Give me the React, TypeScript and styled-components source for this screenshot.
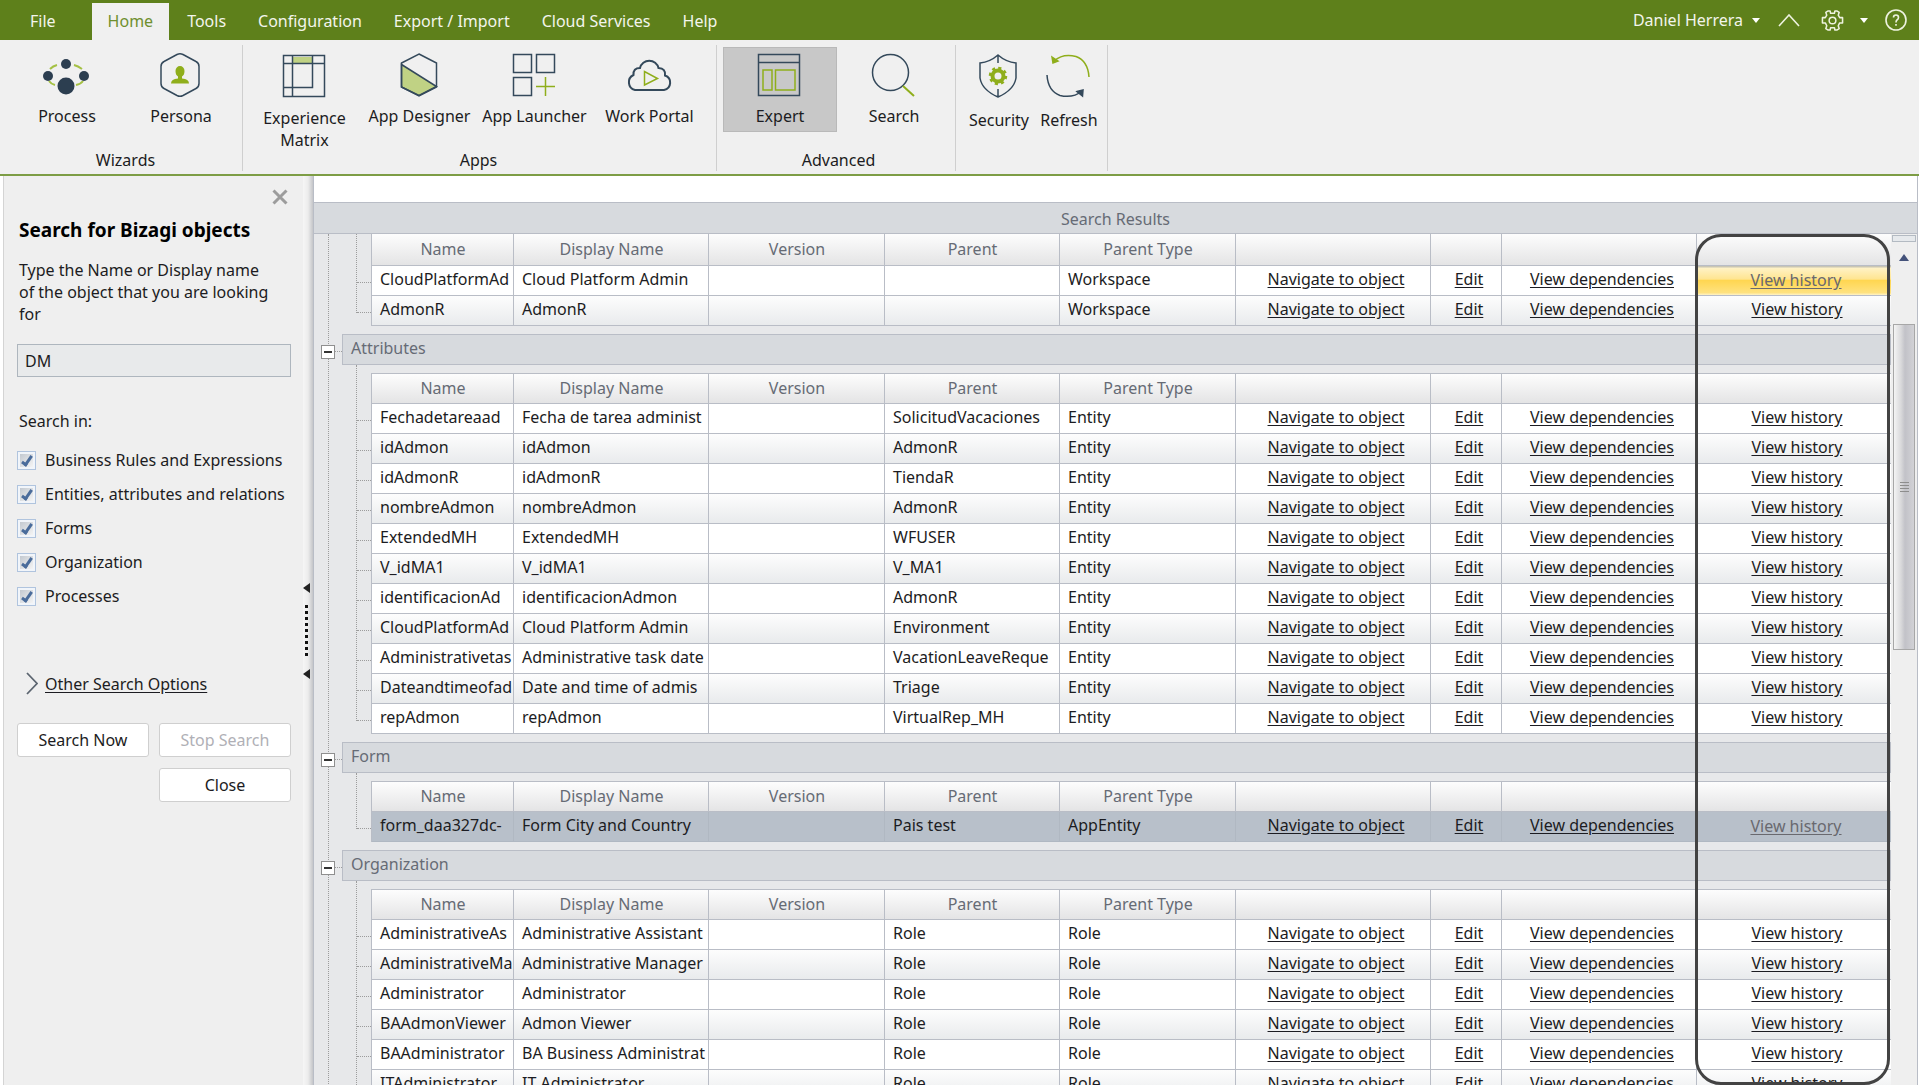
import React from "react";
import styled, { createGlobalStyle, css } from "styled-components";

const color = {
  green: "#5e801b",
  lime: "#8fae1b",
  navy: "#34495b",
  panel: "#f0f0f0",
  line: "#b9bdc6",
  bar: "#d7dade",
  muted: "#666b75",
  text: "#1c1c22",
};

const GlobalStyle = createGlobalStyle`
  *, *::before, *::after { box-sizing: border-box; }
  body { margin: 0; background: #fff; }
  body, button, input, table {
    font-family: "Noto Sans", "Open Sans", sans-serif;
    font-size: 16px;
    line-height: 22px;
    color: ${color.text};
  }
  button { padding: 0; border: 0; background: none; cursor: pointer; }
`;

const Page = styled.div`
  display: flex;
  flex-direction: column;
  height: 100vh;
  overflow: hidden;
`;

/* ---------- top menu ---------- */

const MenuBar = styled.header`
  display: flex;
  justify-content: space-between;
  height: 40px;
  flex: none;
  background: ${color.green};
`;

const Tabs = styled.nav`
  display: flex;
  align-items: flex-end;
`;

const Tab = styled.button<{ $active?: boolean; $file?: boolean }>`
  height: 37px;
  padding: 0 16px 2px;
  color: #f3f5ec;
  ${(p) => p.$file && css`padding: 0 36px 2px 30px;`}
  ${(p) =>
    p.$active &&
    css`
      margin-right: 2px;
      background: ${color.panel};
      color: #6f8f2e;
    `}
`;

const UserArea = styled.div`
  display: flex;
  align-items: center;
  padding-right: 12px;
  color: #f3f5ec;
`;

const UserButton = styled.button`
  display: flex;
  align-items: center;
  gap: 9px;
  color: inherit;
`;

const IconButton = styled.button<{ $gap: number }>`
  display: flex;
  align-items: center;
  gap: 16px;
  margin-left: ${(p) => p.$gap}px;
  color: inherit;
`;

const Caret = styled.span`
  border: 4px solid transparent;
  border-top: 5px solid #fff;
  border-bottom: 0;
`;

/* ---------- ribbon ---------- */

const Ribbon = styled.section`
  display: flex;
  flex: none;
  height: 136px;
  padding: 5px 0 3px 4px;
  background: ${color.panel};
  border-bottom: 2px solid #7d9d45;
`;

const Group = styled.div<{ $left: number; $right: number }>`
  display: flex;
  flex-direction: column;
  justify-content: space-between;
  padding: 2px ${(p) => p.$right}px 0 ${(p) => p.$left}px;
  border-right: 1px solid #cfcfcf;
`;

const GroupButtons = styled.div`
  display: flex;
`;

const GroupCaption = styled.div`
  padding-left: 3px;
  text-align: center;
`;

const ToolButton = styled.button<{ $active?: boolean; $width: number; $low?: boolean; $gap: number }>`
  display: flex;
  flex-direction: column;
  align-items: center;
  justify-content: flex-start;
  gap: ${(p) => p.$gap}px;
  width: ${(p) => p.$width}px;
  height: 85px;
  padding-top: ${(p) => (p.$low ? 5 : 4)}px;
  border: 1px solid transparent;
  white-space: pre-line;
  ${(p) =>
    p.$active &&
    css`
      background: #c8c8c8;
      border-color: #b9b9b9;
    `}
  svg { flex: none; margin-right: 2px; }
`;

/* ---------- workspace ---------- */

const Workspace = styled.main`
  display: flex;
  flex: 1;
  min-height: 0;
  padding: 0 1px 0 3px;
`;

const Sidebar = styled.aside`
  flex: none;
  width: 300px;
  padding: 11px 12px 0 13px;
  border-left: 1px solid #d4d4d4;
  background: #efefef;
`;

const CloseRow = styled.div`
  display: flex;
  justify-content: flex-end;
  padding-right: 3px;
`;

const CloseIcon = styled.button`
  display: flex;
  height: 20px;
  align-items: center;
`;

const Title = styled.h2`
  margin: 12px 0 0 2px;
  font-size: 19px;
  line-height: 22px;
  color: #000;
`;

const Hint = styled.label`
  display: block;
  margin: 18px 18px 19px 2px;
`;

const SearchInput = styled.input`
  display: block;
  width: 100%;
  height: 33px;
  padding: 0 7px;
  border: 1px solid #aeb6be;
  background: #e8eaeb;
`;

const Options = styled.fieldset`
  display: flex;
  flex-direction: column;
  gap: 12px;
  margin: 33px 0 0;
  padding: 0;
  border: 0;
`;

const Legend = styled.legend`
  margin: 0 0 17px 2px;
  padding: 0;
`;

const Option = styled.label`
  display: flex;
  align-items: center;
  gap: 9px;
  white-space: nowrap;
`;

const Checkbox = styled.input`
  appearance: none;
  display: grid;
  place-items: center;
  width: 19px;
  height: 19px;
  margin: 0;
  border: 1px solid #b0c4de;
  background: linear-gradient(135deg, #c3c9d0, #f4f4f4) content-box, #f1f5fa;
  padding: 2px;
  &:checked::after {
    content: "";
    width: 6px;
    height: 12px;
    margin-bottom: 3px;
    border: solid #4a6c9b;
    border-width: 0 3px 3px 0;
    transform: rotate(35deg);
  }
`;

const MoreRow = styled.div`
  display: flex;
  align-items: center;
  gap: 7px;
  margin: 65px 0 28px 9px;
`;

const TextLink = styled.a`
  color: ${color.text};
  text-decoration: underline;
  text-underline-offset: 2px;
`;

const Actions = styled.div`
  display: grid;
  grid-template-columns: 1fr 1fr;
  gap: 11px 10px;
`;

const ActionButton = styled.button<{ $second?: boolean }>`
  height: 34px;
  border: 1px solid #cfcfcf;
  border-radius: 3px;
  background: #fff;
  ${(p) => p.$second && css`grid-column: 2;`}
  &:disabled { color: #b0b0b6; }
`;

const Splitter = styled.div`
  display: flex;
  flex: none;
  flex-direction: column;
  align-items: center;
  gap: 12px;
  width: 10px;
  padding: 407px 3px 0 0;
  background: linear-gradient(90deg, #f6f6f6, #ececec 50%, #c4c5c8);
`;

const Arrow = styled.span`
  border: 5px solid transparent;
  border-right: 7px solid #222;
  border-left: 0;
`;

const Dots = styled.span`
  width: 3px;
  height: 52px;
  background: repeating-linear-gradient(180deg, #111 0 3px, transparent 3px 6px);
`;

/* ---------- results ---------- */

const Results = styled.section`
  display: flex;
  flex: 1;
  flex-direction: column;
  min-width: 0;
  padding-top: 26px;
  border: 0 solid ${color.line};
  border-width: 0 1px;
`;

const ResultsTitle = styled.h1`
  flex: none;
  margin: 0;
  height: 32px;
  border: solid ${color.line};
  border-width: 1px 0;
  background: ${color.bar};
  color: ${color.muted};
  font-size: 16px;
  font-weight: 400;
  line-height: 32px;
  text-align: center;
`;

const ResultsBody = styled.div`
  display: flex;
  flex: 1;
  min-height: 0;
  background: #e7e8ea;
`;

const TreeViewport = styled.div`
  position: relative;
  flex: 1;
  min-width: 0;
  overflow: hidden;
`;

const Tree = styled.div`
  margin-left: 14px;
  border-left: 1px dotted #9c9c9c;
`;

const GroupHead = styled.div`
  display: flex;
  align-items: center;
  height: 31px;
  margin-left: -8px;
`;

const Toggle = styled.button`
  display: grid;
  place-items: center;
  width: 14px;
  height: 14px;
  margin-top: 4px;
  border: 1px solid #8f8f8f;
  background: #fff;
  &::after {
    content: "";
    width: 8px;
    height: 2px;
    background: #333;
  }
`;

const Stub = styled.span`
  width: 7px;
  margin-top: 4px;
  border-top: 1px dotted #9c9c9c;
`;

const GroupTitle = styled.h3`
  flex: 1;
  margin: 0;
  height: 31px;
  padding: 0 8px;
  border: 1px solid ${color.line};
  background: ${color.bar};
  color: ${color.muted};
  font-size: 16px;
  font-weight: 400;
  line-height: 26px;
`;

const GroupBody = styled.div`
  display: flex;
  align-items: flex-start;
  padding-left: 27px;
  margin-bottom: 8px;
`;

const Rail = styled.div<{ $first?: boolean }>`
  flex: none;
  width: 15px;
  padding-top: ${(p) => (p.$first ? 19 : 26)}px;
  border-left: 1px dotted #9c9c9c;
`;

const Tick = styled.div`
  height: 30px;
  border-bottom: 1px dotted #9c9c9c;
`;

const Grid = styled.table<{ $first?: boolean }>`
  flex: 1;
  width: 100%;
  min-width: 0;
  margin-top: ${(p) => (p.$first ? 0 : 8)}px;
  table-layout: fixed;
  border-collapse: separate;
  border-spacing: 0;
  border: solid ${color.line};
  border-width: ${(p) => (p.$first ? 0 : 1)}px 0 0 1px;
`;

const Col = styled.col<{ $w: number }>`
  width: ${(p) => p.$w}px;
`;

const HeadCell = styled.th<{ $tall?: boolean }>`
  height: ${(p) => (p.$tall ? 32 : 30)}px;
  padding: 0 0 1px 1px;
  border: solid ${color.line};
  border-width: 0 1px 1px 0;
  background: linear-gradient(#fdfdfd, #e4e4e5);
  color: ${color.muted};
  font-weight: 400;
`;

const Row = styled.tr<{ $selected?: boolean }>`
  background: #fff;
  &:nth-child(even) { background: linear-gradient(#fdfdfd, #e8eaec); }
  ${(p) => p.$selected && css`&& { background: #b8c0ca; }`}
`;

const Cell = styled.td<{ $link?: boolean; $selected?: boolean; $hot?: boolean; $dim?: boolean }>`
  height: 30px;
  padding: 0 0 4px ${(p) => (p.$link ? 6 : 8)}px;
  border: solid ${(p) => (p.$selected ? "#b0b8c2" : color.line)};
  border-width: 0 1px 1px 0;
  overflow: hidden;
  white-space: nowrap;
  text-align: ${(p) => (p.$link ? "center" : "left")};
  ${(p) =>
    p.$hot &&
    css`
      background: linear-gradient(#c9c5b4 0 1px, #fff2c6 2px, #ffe591 45%, #ffd651 50%, #ffe27f 92%, #fff3c8);
    `}
  ${(p) =>
    p.$dim &&
    css`
      padding: 0 0 2px 4px;
      a { color: #69696f; }
    `}
`;

const Callout = styled.div`
  position: absolute;
  top: 0;
  bottom: 0;
  right: 1px;
  width: calc((100% - 58px) * 0.1285);
  border: 3px solid #434343;
  border-radius: 26px;
  pointer-events: none;
`;

const ScrollTrack = styled.div`
  display: flex;
  flex: none;
  flex-direction: column;
  align-items: center;
  width: 26px;
  padding-top: 1px;
  background: #efefef;
`;

const SplitBox = styled.div`
  align-self: stretch;
  height: 7px;
  margin: 0 1px;
  border: 1px solid #b3bac2;
  background: #e6e9ec;
`;

const ScrollUp = styled.button`
  height: 7px;
  margin: 12px 0 63px;
  border: 5px solid transparent;
  border-bottom: 7px solid #44527a;
  border-top: 0;
`;

const ScrollThumb = styled.div`
  display: flex;
  align-items: center;
  justify-content: center;
  width: 22px;
  height: 326px;
  border: 1px solid #a7a7a7;
  background: linear-gradient(90deg, #f4f4f4, #d9d9db 35%, #c2c2c8 55%, #d2d2d6);
`;

const Grip = styled.span`
  width: 9px;
  height: 11px;
  background: repeating-linear-gradient(180deg, #8d8d8d 0 1px, transparent 1px 3px);
`;

/* ---------- icons ---------- */

type IconProps = { children: React.ReactNode };
const ToolIcon = ({ children }: IconProps) => (
  <svg width="46" height="46" viewBox="0 0 46 46" fill="none" stroke={color.navy} strokeWidth="1.5" aria-hidden="true">
    {children}
  </svg>
);

const icons: Record<string, React.ReactNode> = {
  Process: (
    <ToolIcon>
      <path d="M7 17q3-3 7-4M31 13q4 1 8 4M6 29q2 3 6 4M33 33q5-1 7-4" stroke="#a5c145" strokeWidth="2" />
      <g fill="#2c3e50" stroke="none">
        <circle cx="23" cy="12" r="5" />
        <circle cx="5" cy="24" r="5" />
        <circle cx="41" cy="24" r="5" />
        <circle cx="23" cy="34" r="8.5" />
      </g>
    </ToolIcon>
  ),
  Persona: (
    <ToolIcon>
      <path d="M20 2.500q3-1.500 6 0l13 7q3 1.500 3 5v17q0 3.500-3 5l-13 7q-3 1.500-6 0l-13-7q-3-1.500-3-5v-17q0-3.500 3-5z" />
      <path d="M23 14a4.500 5 0 0 1 4.500 5q0 4-2.500 5.500v2q7 .5 7 5H14q0-4.500 7-5v-2q-2.500-1.500-2.500-5.500a4.500 5 0 0 1 4.500-5z" fill={color.lime} stroke="none" />
    </ToolIcon>
  ),
  "Experience\nMatrix": (
    <ToolIcon>
      <path d="M12 4h19v7H12z" fill="#c0d284" stroke="none" />
      <path d="M2.500 2.500h41v41h-41zM2.500 10.500h41M11.500 2.500v41M31.500 2.500v32h-29" />
    </ToolIcon>
  ),
  "App Designer": (
    <ToolIcon>
      <path d="M5.500 12.500l35 22-17.500 9-17.500-8.500z" fill="#c0d284" />
      <path d="M23 2l17.500 9v24L23 44 5.500 35V11z" />
    </ToolIcon>
  ),
  "App Launcher": (
    <ToolIcon>
      <path d="M2.500 2.500h18v18h-18zM25.500 2.500h18v18h-18zM2.500 25.500h18v18h-18z" />
      <path d="M34.500 25v19M25 34.500h19" stroke={color.lime} />
    </ToolIcon>
  ),
  "Work Portal": (
    <ToolIcon>
      <path d="M9 38h29a7.500 7.500 0 0 0 1-14.500q1-7-6.500-7.500A9.500 9.500 0 0 0 14 16q-7 0-6.500 7A8 8 0 0 0 9 38z" strokeWidth="2" />
      <path d="M18.500 19.500v13.500l13-6.500z" stroke={color.lime} />
    </ToolIcon>
  ),
  Expert: (
    <ToolIcon>
      <path d="M2.500 2.500h41v41h-41zM2.500 10.500h41" />
      <path d="M7 18h9v20H7zM19.500 18H39v20H19.500z" stroke={color.lime} />
    </ToolIcon>
  ),
  Search: (
    <ToolIcon>
      <circle cx="20.5" cy="20.5" r="18" />
      <path d="M33 34l11 10" stroke={color.lime} strokeWidth="2" />
    </ToolIcon>
  ),
  Security: (
    <ToolIcon>
      <path d="M23 2q8 7 18 8v15q-2 12-18 19Q7 37 5 25V10Q15 9 23 2zM23 2v8M23 36v8" />
      <circle cx="23" cy="23" r="5.5" stroke={color.lime} strokeWidth="4" />
      <circle cx="23" cy="23" r="8" stroke={color.lime} strokeWidth="2.5" strokeDasharray="3.14 3.14" />
    </ToolIcon>
  ),
  Refresh: (
    <ToolIcon>
      <path d="M9 8q9-8 22-4.500Q43 8 44 24" stroke={color.lime} />
      <path d="M7 4l1 6 5-2z" fill={color.lime} stroke={color.lime} />
      <path d="M2 22q1 16 13 20.500 13 3 22-4.500" />
      <path d="M32 38.500l6-1.500-.5 6z" fill={color.navy} />
    </ToolIcon>
  ),
};

const GearIcon = () => (
  <svg width="23" height="23" viewBox="0 0 24 24" fill="none" stroke="#eef2e0" strokeWidth="1.6" aria-hidden="true">
    <path d="M10 4.500L9.500 2h-2L5 3.500l1 3L4.500 9H1.500v5.500h3L6 17.500l-1 3L7.500 22h2l.5-2.500h4l.5 2.500h2l2.500-1.500-1-3 1.500-3h3V9h-3L18 6.500l1-3L16.500 2h-2L14 4.500z" strokeLinejoin="round" />
    <circle cx="12" cy="12" r="3.5" />
  </svg>
);

/* ---------- data ---------- */

type Tool = { label: string; low?: boolean; gap?: number };
type RibbonGroup = { caption: string; width: number; left: number; right: number; tools: Tool[] };

const ribbonGroups: RibbonGroup[] = [
  { caption: "Wizards", width: 114, left: 6, right: 4, tools: [{ label: "Process" }, { label: "Persona" }] },
  {
    caption: "Apps",
    width: 115,
    left: 4,
    right: 9,
    tools: [
      { label: "Experience\nMatrix", low: true, gap: 8 },
      { label: "App Designer" },
      { label: "App Launcher" },
      { label: "Work Portal" },
    ],
  },
  { caption: "Advanced", width: 114, left: 6, right: 4, tools: [{ label: "Expert" }, { label: "Search" }] },
  {
    caption: "",
    width: 70,
    left: 8,
    right: 3,
    tools: [
      { label: "Security", low: true, gap: 10 },
      { label: "Refresh", low: true, gap: 10 },
    ],
  },
];

const searchAreas = [
  "Business Rules and Expressions",
  "Entities, attributes and relations",
  "Forms",
  "Organization",
  "Processes",
];

const columns = [
  { label: "Name", width: 142 },
  { label: "Display Name", width: 195 },
  { label: "Version", width: 176 },
  { label: "Parent", width: 175 },
  { label: "Parent Type", width: 176 },
  { label: "", width: 195 },
  { label: "", width: 71 },
  { label: "", width: 195 },
  { label: "", width: 195 },
];

type Item = [name: string, display: string, parent: string, type: string];
type ResultGroup = { title?: string; items: Item[]; hot?: number; selected?: number };

const groups: ResultGroup[] = [
  {
    hot: 0,
    items: [
      ["CloudPlatformAd", "Cloud Platform Admin", "", "Workspace"],
      ["AdmonR", "AdmonR", "", "Workspace"],
    ],
  },
  {
    title: "Attributes",
    items: [
      ["Fechadetareaad", "Fecha de tarea administ", "SolicitudVacaciones", "Entity"],
      ["idAdmon", "idAdmon", "AdmonR", "Entity"],
      ["idAdmonR", "idAdmonR", "TiendaR", "Entity"],
      ["nombreAdmon", "nombreAdmon", "AdmonR", "Entity"],
      ["ExtendedMH", "ExtendedMH", "WFUSER", "Entity"],
      ["V_idMA1", "V_idMA1", "V_MA1", "Entity"],
      ["identificacionAd", "identificacionAdmon", "AdmonR", "Entity"],
      ["CloudPlatformAd", "Cloud Platform Admin", "Environment", "Entity"],
      ["Administrativetas", "Administrative task date", "VacationLeaveReque", "Entity"],
      ["Dateandtimeofad", "Date and time of admis", "Triage", "Entity"],
      ["repAdmon", "repAdmon", "VirtualRep_MH", "Entity"],
    ],
  },
  {
    title: "Form",
    selected: 0,
    items: [["form_daa327dc-", "Form City and Country", "Pais test", "AppEntity"]],
  },
  {
    title: "Organization",
    items: [
      ["AdministrativeAs", "Administrative Assistant", "Role", "Role"],
      ["AdministrativeMa", "Administrative Manager", "Role", "Role"],
      ["Administrator", "Administrator", "Role", "Role"],
      ["BAAdmonViewer", "Admon Viewer", "Role", "Role"],
      ["BAAdministrator", "BA Business Administrat", "Role", "Role"],
      ["ITAdministrator", "IT Administrator", "Role", "Role"],
    ],
  },
];

const rowLinks = ["Navigate to object", "Edit", "View dependencies", "View history"];

/* ---------- components ---------- */

function ResultTable({ group, first }: { group: ResultGroup; first: boolean }) {
  return (
    <GroupBody>
      <Rail $first={first}>
        {group.items.map((item) => (
          <Tick key={item[0]} />
        ))}
      </Rail>
      <Grid $first={first}>
        <colgroup>
          {columns.map((c, i) => (
            <Col key={i} $w={c.width} />
          ))}
        </colgroup>
        <thead>
          <tr>
            {columns.map((c, i) => (
              <HeadCell key={i} $tall={first}>{c.label}</HeadCell>
            ))}
          </tr>
        </thead>
        <tbody>
          {group.items.map(([name, display, parent, type], r) => {
            const selected = group.selected === r;
            return (
              <Row key={name} $selected={selected}>
                {[name, display, "", parent, type].map((text, i) => (
                  <Cell key={i} $selected={selected}>{text}</Cell>
                ))}
                {rowLinks.map((label, i) => {
                  const last = i === rowLinks.length - 1;
                  return (
                    <Cell
                      key={label}
                      $link
                      $selected={selected}
                      $hot={last && group.hot === r}
                      $dim={last && (group.hot === r || selected)}
                    >
                      <TextLink href="#">{label}</TextLink>
                    </Cell>
                  );
                })}
              </Row>
            );
          })}
        </tbody>
      </Grid>
    </GroupBody>
  );
}

export default function App() {
  return (
    <Page>
      <GlobalStyle />
      <MenuBar>
        <Tabs>
          <Tab $file>File</Tab>
          <Tab $active>Home</Tab>
          {["Tools", "Configuration", "Export / Import", "Cloud Services", "Help"].map((t) => (
            <Tab key={t}>{t}</Tab>
          ))}
        </Tabs>
        <UserArea>
          <UserButton>
            Daniel Herrera
            <Caret />
          </UserButton>
          <IconButton $gap={18} aria-label="Collapse ribbon">
            <svg width="22" height="13" viewBox="0 0 22 13" fill="none" stroke="#eef2e0" strokeWidth="1.6">
              <path d="M1 12L11 1l10 11" />
            </svg>
          </IconButton>
          <IconButton $gap={21} aria-label="Settings">
            <GearIcon />
            <Caret />
          </IconButton>
          <IconButton $gap={17} aria-label="Help">
            <svg width="22" height="22" viewBox="0 0 22 22" fill="none" stroke="#eef2e0" strokeWidth="1.6">
              <circle cx="11" cy="11" r="10" />
              <path d="M8.500 8.500q0-2.500 2.500-2.500t2.500 2.500q0 1.500-1.500 2.500-1 .7-1 2.500M11 15v1.800" />
            </svg>
          </IconButton>
        </UserArea>
      </MenuBar>

      <Ribbon>
        {ribbonGroups.map((g) => (
          <Group key={g.caption} $left={g.left} $right={g.right}>
            <GroupButtons>
              {g.tools.map((t) => (
                <ToolButton
                  key={t.label}
                  $active={t.label === "Expert"}
                  $width={g.width}
                  $low={t.low}
                  $gap={t.gap ?? 7}
                >
                  {icons[t.label]}
                  {t.label}
                </ToolButton>
              ))}
            </GroupButtons>
            <GroupCaption>{g.caption}</GroupCaption>
          </Group>
        ))}
      </Ribbon>

      <Workspace>
        <Sidebar>
          <CloseRow>
            <CloseIcon aria-label="Close panel">
              <svg width="16" height="16" viewBox="0 0 16 16" stroke="#9c9c9c" strokeWidth="3">
                <path d="M1.500 1.500l13 13M14.500 1.500l-13 13" />
              </svg>
            </CloseIcon>
          </CloseRow>
          <Title>Search for Bizagi objects</Title>
          <Hint htmlFor="object-name">
            Type the Name or Display name of the object that you are looking for
          </Hint>
          <SearchInput id="object-name" type="text" defaultValue="DM" />
          <Options>
            <Legend>Search in:</Legend>
            {searchAreas.map((a) => (
              <Option key={a}>
                <Checkbox type="checkbox" defaultChecked />
                {a}
              </Option>
            ))}
          </Options>
          <MoreRow>
            <svg width="12" height="23" viewBox="0 0 12 23" fill="none" stroke="#5c6570" strokeWidth="1.8" aria-hidden="true">
              <path d="M1 1l10 10.500L1 22" />
            </svg>
            <TextLink href="#">Other Search Options</TextLink>
          </MoreRow>
          <Actions>
            <ActionButton>Search Now</ActionButton>
            <ActionButton disabled>Stop Search</ActionButton>
            <ActionButton $second>Close</ActionButton>
          </Actions>
        </Sidebar>

        <Splitter>
          <Arrow />
          <Dots />
          <Arrow />
        </Splitter>

        <Results>
          <ResultsTitle>Search Results</ResultsTitle>
          <ResultsBody>
            <TreeViewport>
              <Tree>
                {groups.map((g, i) => (
                  <React.Fragment key={i}>
                    {g.title && (
                      <GroupHead>
                        <Toggle aria-label={`Collapse ${g.title}`} />
                        <Stub />
                        <GroupTitle>{g.title}</GroupTitle>
                      </GroupHead>
                    )}
                    <ResultTable group={g} first={i === 0} />
                  </React.Fragment>
                ))}
              </Tree>
              <Callout />
            </TreeViewport>
            <ScrollTrack>
              <SplitBox />
              <ScrollUp aria-label="Scroll up" />
              <ScrollThumb>
                <Grip />
              </ScrollThumb>
            </ScrollTrack>
          </ResultsBody>
        </Results>
      </Workspace>
    </Page>
  );
}
